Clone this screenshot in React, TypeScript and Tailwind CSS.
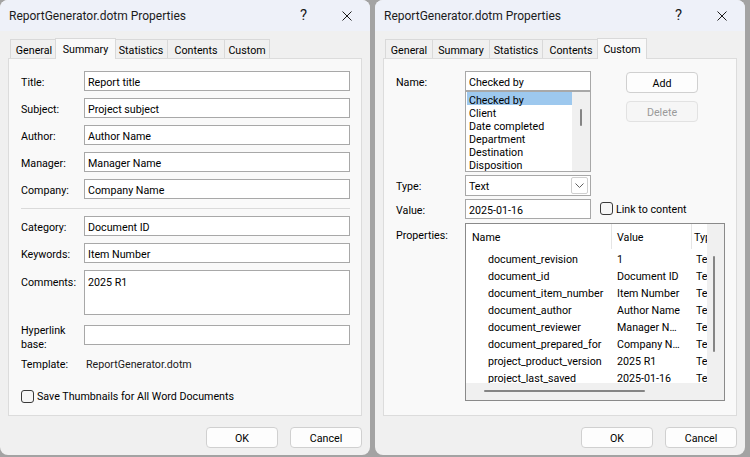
import React from 'react';

const SUMMARY_TABS: [string, number][] = [
  ['General', 47],
  ['Summary', 57],
  ['Statistics', 53],
  ['Contents', 57],
  ['Custom', 46],
];

// Roboto sits a little high compared to the dialog font, so text gets nudged down
const T = ({ children, className = '' }: { children: React.ReactNode; className?: string }) => (
  <span className={`relative top-[2px] ${className}`}>{children}</span>
);

function TitleBar() {
  return (
    <div className="h-[31px] shrink-0 bg-[#eef1f9] flex items-center pl-[9px] pr-[18px]">
      <span className="text-[12px] text-[#1b1b1b]">ReportGenerator.dotm Properties</span>
      <span className="ml-auto mr-[35px] text-[15px] leading-none text-[#1b1b1b]">?</span>
      <svg width="10" height="10" viewBox="0 0 10 10" className="text-[#1b1b1b]">
        <path d="M0.5 0.5 L9.5 9.5 M9.5 0.5 L0.5 9.5" stroke="currentColor" strokeWidth="1" />
      </svg>
    </div>
  );
}

function Tabs({ active }: { active: string }) {
  return (
    <div className="h-[20px] mt-[7px] pl-[10px] flex items-end shrink-0">
      {SUMMARY_TABS.map(([name, w], i) => {
        const last = i === SUMMARY_TABS.length - 1;
        if (name === active) {
          return (
            <div
              key={name}
              style={{ width: w + 4 }}
              className="relative z-10 -mx-[2px] -mb-px h-[21px] border-t border-l border-r border-[#d9d9d9] bg-[#f9f9f9] flex items-center justify-center pb-[2px]"
            >
              <T>{name}</T>
            </div>
          );
        }
        return (
          <div
            key={name}
            style={{ width: w }}
            className={`h-[19px] border-t border-l ${last ? 'border-r' : ''} border-[#d9d9d9] bg-[#f0f0f0] flex items-center justify-center`}
          >
            <T>{name}</T>
          </div>
        );
      })}
    </div>
  );
}

function Buttons() {
  return (
    <div className="mt-[11px] flex justify-end gap-[12px] pr-[8px]">
      <button className="w-[72px] h-[21px] rounded-[4px] border border-[#d0d0d0] bg-[#fdfdfd]">
        <T>OK</T>
      </button>
      <button className="w-[72px] h-[21px] rounded-[4px] border border-[#d0d0d0] bg-[#fdfdfd]">
        <T>Cancel</T>
      </button>
    </div>
  );
}

function Field({ label, value }: { label: string; value: string }) {
  return (
    <div className="flex items-center h-[20px]">
      <div className="w-[63px]">
        <T>{label}</T>
      </div>
      <div className="w-[266px] h-[20px] border border-[#a8a8a8] bg-white pl-[3px] flex items-center">
        <T>{value}</T>
      </div>
    </div>
  );
}

function Checkbox() {
  return <div className="w-[13px] h-[13px] shrink-0 rounded-[3px] border border-[#3a3a3a] bg-[#f6f6f6]" />;
}

function SummaryWindow() {
  return (
    <div className="w-[370px] h-[455px] shrink-0 rounded-[8px] bg-[#f0f0f0] overflow-hidden flex flex-col">
      <TitleBar />
      <Tabs active="Summary" />
      <div className="mx-[8px] h-[358px] border border-[#dcdcdc] bg-[#f9f9f9] pt-[12px] pl-[12px]">
        <div className="flex flex-col gap-[7px]">
          <Field label="Title:" value="Report title" />
          <Field label="Subject:" value="Project subject" />
          <Field label="Author:" value="Author Name" />
          <Field label="Manager:" value="Manager Name" />
          <Field label="Company:" value="Company Name" />
        </div>
        <div className="mt-[9px] w-[329px] h-px bg-[#dadada]" />
        <div className="mt-[7px] flex flex-col gap-[7px]">
          <Field label="Category:" value="Document ID" />
          <Field label="Keywords:" value="Item Number" />
          <div className="flex">
            <div className="w-[63px] pt-[4px] leading-[14px]">
              <T>Comments:</T>
            </div>
            <div className="w-[266px] h-[45px] border border-[#a8a8a8] bg-white pl-[3px] pt-[3px] leading-[14px]">
              <T>2025 R1</T>
            </div>
          </div>
        </div>
        <div className="mt-[10px] h-[20px] flex items-center">
          <div className="w-[63px] leading-[14px] pt-[1px] relative top-[2px]">
            Hyperlink
            <br />
            base:
          </div>
          <div className="w-[266px] h-[20px] border border-[#a8a8a8] bg-white" />
        </div>
        <div className="mt-[11px] flex items-center h-[14px]">
          <div className="w-[65px]">
            <T>Template:</T>
          </div>
          <div className="text-[#1b1b1b]">
            <T>ReportGenerator.dotm</T>
          </div>
        </div>
        <div className="mt-[18px] flex items-center gap-[3px]">
          <Checkbox />
          <span className="relative top-[1px]">Save Thumbnails for All Word Documents</span>
        </div>
      </div>
      <Buttons />
    </div>
  );
}

const NAMES = ['Checked by', 'Client', 'Date completed', 'Department', 'Destination', 'Disposition'];

const PROPS: [string, string][] = [
  ['document_revision', '1'],
  ['document_id', 'Document ID'],
  ['document_item_number', 'Item Number'],
  ['document_author', 'Author Name'],
  ['document_reviewer', 'Manager N…'],
  ['document_prepared_for', 'Company N…'],
  ['project_product_version', '2025 R1'],
  ['project_last_saved', '2025-01-16'],
];

function CustomWindow() {
  return (
    <div className="w-[370px] h-[455px] shrink-0 rounded-[8px] bg-[#f0f0f0] overflow-hidden flex flex-col">
      <TitleBar />
      <Tabs active="Custom" />
      <div className="mx-[8px] h-[358px] border border-[#dcdcdc] bg-[#f9f9f9] pt-[12px] pl-[12px]">
        {/* name + list + add/delete */}
        <div className="flex">
          <div className="w-[69px] h-[20px] flex items-center">
            <T>Name:</T>
          </div>
          <div className="w-[126px]">
            <div className="h-[20px] border border-[#a8a8a8] bg-white pl-[3px] flex items-center">
              <T>Checked by</T>
            </div>
            <div className="h-[81px] border border-[#a8a8a8] bg-white flex overflow-hidden">
              <div className="flex-1 pl-px">
                {NAMES.map((n, i) => (
                  <div key={n} className={`h-[13px] leading-[13px] pl-[2px] ${i === 0 ? 'bg-[#9dc8ee]' : ''}`}>
                    <span className="relative top-[1.5px]">{n}</span>
                  </div>
                ))}
              </div>
              <div className="w-[18px] bg-[#f0f0f0] relative">
                <div className="absolute left-[8px] top-[17px] w-[2px] h-[17px] rounded-full bg-[#858585]" />
              </div>
            </div>
          </div>
          <div className="ml-[35px] w-[72px]">
            <button className="mt-px w-[72px] h-[21px] rounded-[4px] border border-[#d0d0d0] bg-[#fdfdfd]">
              <T>Add</T>
            </button>
            <button className="mt-[8px] w-[72px] h-[21px] rounded-[4px] border border-[#e2e2e2] bg-[#f6f6f6] text-[#9a9a9a]">
              <T>Delete</T>
            </button>
          </div>
        </div>

        {/* type */}
        <div className="mt-[3px] flex items-center">
          <div className="w-[69px]">
            <T>Type:</T>
          </div>
          <div className="w-[126px] h-[21px] border border-[#a8a8a8] bg-white pl-[3px] pr-[2px] flex items-center">
            <T>Text</T>
            <div className="ml-auto w-[17px] h-[17px] border border-[#cfcfcf] rounded-[2px] flex items-center justify-center">
              <svg width="9" height="5" viewBox="0 0 9 5">
                <path d="M0.5 0.5 L4.5 4.5 L8.5 0.5" fill="none" stroke="#606060" strokeWidth="1" />
              </svg>
            </div>
          </div>
        </div>

        {/* value */}
        <div className="mt-[3px] flex items-center">
          <div className="w-[69px]">
            <T>Value:</T>
          </div>
          <div className="w-[126px] h-[20px] border border-[#a8a8a8] bg-white pl-[3px] flex items-center">
            <T>2025-01-16</T>
          </div>
          <div className="ml-[9px] flex items-center gap-[3px]">
            <Checkbox />
            <span className="relative top-[1px]">Link to content</span>
          </div>
        </div>

        {/* properties */}
        <div className="mt-[4px] flex">
          <div className="w-[69px] pt-[3px]">
            <T>Properties:</T>
          </div>
          <div className="w-[260px] h-[178px] border border-[#8a8a8a] bg-white flex flex-col overflow-hidden">
            <div className="flex h-[159px]">
              <div className="w-[241px] overflow-hidden">
                <div className="flex h-[25px] items-center whitespace-nowrap">
                  <div className="w-[145px] shrink-0 pl-[6px]">
                    <T>Name</T>
                  </div>
                  <div className="w-px h-[25px] bg-[#e5e5e5] shrink-0" />
                  <div className="w-[79px] shrink-0 pl-[5px]">
                    <T>Value</T>
                  </div>
                  <div className="w-px h-[25px] bg-[#e5e5e5] shrink-0" />
                  <div className="shrink-0 pl-[2px]">
                    <T>Type</T>
                  </div>
                </div>
                {PROPS.map(([k, v]) => (
                  <div key={k} className="flex h-[17px] items-center whitespace-nowrap">
                    <div className="w-[146px] shrink-0 pl-[22px]">
                      <T className="top-[3px]">{k}</T>
                    </div>
                    <div className="w-[79px] shrink-0 pl-[5px]">
                      <T className="top-[3px]">{v}</T>
                    </div>
                    <div className="shrink-0 pl-[5px]">
                      <T className="top-[3px]">Text</T>
                    </div>
                  </div>
                ))}
              </div>
              <div className="w-[17px] bg-[#f0f0f0] relative">
                <div className="absolute left-[6px] top-[32px] w-[2px] h-[96px] rounded-full bg-[#858585]" />
              </div>
            </div>
            <div className="h-[17px] bg-[#f0f0f0] relative">
              <div className="absolute left-[18px] top-[7px] w-[161px] h-[2px] rounded-full bg-[#858585]" />
            </div>
          </div>
        </div>
      </div>
      <Buttons />
    </div>
  );
}

export default function App() {
  return (
    <div className="w-[750px] h-[457px] bg-[#a3a3a3] flex gap-[5px] overflow-hidden font-[family-name:Roboto,sans-serif] text-[10.7px] text-black">
      <SummaryWindow />
      <CustomWindow />
    </div>
  );
}
